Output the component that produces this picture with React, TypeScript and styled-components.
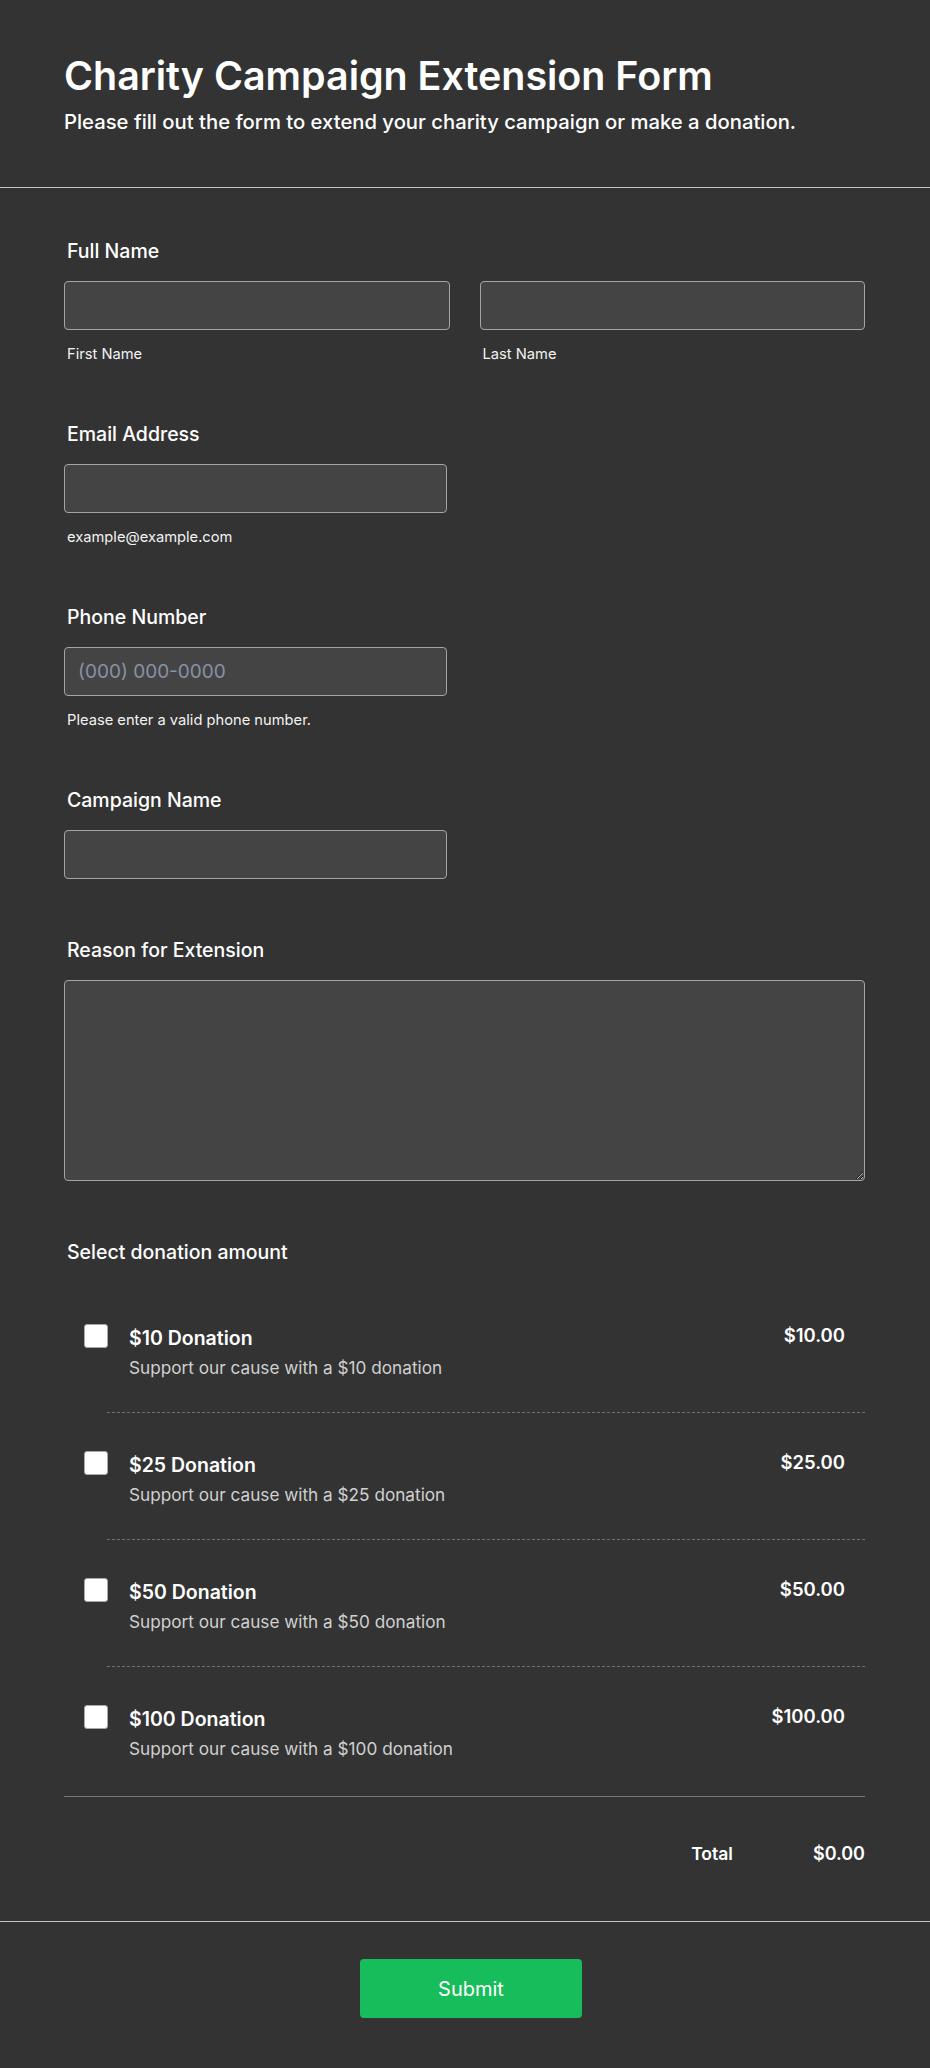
import React from "react";
import styled, { createGlobalStyle } from "styled-components";

const GlobalStyle = createGlobalStyle`
  * { box-sizing: border-box; }
  html, body { margin: 0; padding: 0; background: #333333; }
  body { font-family: Inter, "Noto Sans", "Liberation Sans", sans-serif; color: #ffffff; }
`;

const Page = styled.div`
  min-height: 2068px;
  background: #333333;
  display: flex;
  flex-direction: column;
`;

const Header = styled.header`
  padding: 52px 64px 53px;
  border-bottom: 1px solid #c4c4c4;
  display: flex;
  flex-direction: column;
  gap: 9px;
`;

const Title = styled.h1`
  margin: 0;
  font-size: 39.4px;
  font-weight: 600;
  line-height: normal;
  color: #ffffff;
`;

const Subtitle = styled.p`
  margin: 0;
  font-size: 20.25px;
  font-weight: 500;
  line-height: normal;
  color: #ffffff;
`;

const FormBody = styled.section`
  padding: 51px 65px 0 64px;
  display: flex;
  flex-direction: column;
  gap: 59px;
  border-bottom: 1px solid #c4c4c4;
`;

const Field = styled.div`
  display: flex;
  flex-direction: column;
`;

const Label = styled.label`
  font-size: 19.5px;
  font-weight: 500;
  line-height: normal;
  color: #ffffff;
  margin: 0 0 18px 3px;
`;

const TwoCols = styled.div`
  display: grid;
  grid-template-columns: 1fr 1fr;
  column-gap: 30px;
`;

const Col = styled.div`
  display: flex;
  flex-direction: column;
`;

const Input = styled.input<{ $narrow?: boolean }>`
  width: ${(p) => (p.$narrow ? "383px" : "100%")};
  height: 49px;
  background: #444444;
  border: 1px solid #a4a4aa;
  border-radius: 4px;
  padding: 0 13px;
  font-family: inherit;
  font-size: 19px;
  color: #ffffff;
  outline: none;
  &::placeholder {
    color: #8792a6;
  }
`;

const TextArea = styled.textarea`
  width: 100%;
  height: 201px;
  background: #444444;
  border: 1px solid #a4a4aa;
  border-radius: 4px;
  padding: 12px 13px;
  font-family: inherit;
  font-size: 19px;
  color: #ffffff;
  outline: none;
  display: block;
`;

const Hint = styled.span`
  margin: 15px 0 0 3px;
  font-size: 14.7px;
  line-height: normal;
  color: #f2f2f2;
`;

const DonationBlock = styled.div`
  display: flex;
  flex-direction: column;
`;

const DonationLabel = styled(Label)`
  margin-bottom: 22px;
`;

const List = styled.div`
  display: flex;
  flex-direction: column;
  padding-bottom: 3px;
  border-bottom: 1px solid #777777;
`;

const Item = styled.div`
  display: flex;
  align-items: flex-start;
  padding: 38px 20px 34px;
  gap: 21px;
`;

const Separator = styled.div`
  margin-left: 43px;
  border-top: 1px dashed #707070;
`;

const Check = styled.input`
  appearance: none;
  -webkit-appearance: none;
  margin: 0;
  width: 24px;
  height: 24px;
  flex: 0 0 24px;
  background: #ffffff;
  border: 1px solid #a9a9a9;
  border-radius: 3px;
`;

const ItemText = styled.div`
  flex: 1;
  display: flex;
  flex-direction: column;
  gap: 7px;
  padding-top: 2px;
`;

const ItemTitle = styled.span`
  font-size: 19.5px;
  font-weight: 600;
  line-height: normal;
  color: #ffffff;
`;

const ItemDesc = styled.span`
  font-size: 17.2px;
  line-height: normal;
  color: #d0d0d0;
`;

const Price = styled.span`
  font-size: 18.5px;
  font-weight: 600;
  line-height: normal;
  color: #ffffff;
`;

const TotalRow = styled.div`
  display: flex;
  justify-content: flex-end;
  align-items: baseline;
  gap: 80px;
  padding: 46px 0 57px;
`;

const TotalLabel = styled.span`
  font-size: 17.5px;
  font-weight: 600;
  color: #ffffff;
`;

const TotalValue = styled.span`
  font-size: 18px;
  font-weight: 600;
  color: #ffffff;
`;

const Footer = styled.footer`
  display: flex;
  justify-content: center;
  padding: 37px 0 50px 12px;
`;

const SubmitButton = styled.button`
  width: 222px;
  height: 59px;
  background: #18bd5b;
  border: none;
  border-radius: 4px;
  color: #ffffff;
  font-family: inherit;
  font-size: 20px;
  font-weight: 400;
  cursor: pointer;
`;

const donations = [
  { amount: 10, price: "$10.00" },
  { amount: 25, price: "$25.00" },
  { amount: 50, price: "$50.00" },
  { amount: 100, price: "$100.00" },
];

export default function App() {
  return (
    <Page>
      <GlobalStyle />
      <Header>
        <Title>Charity Campaign Extension Form</Title>
        <Subtitle>Please fill out the form to extend your charity campaign or make a donation.</Subtitle>
      </Header>
      <FormBody>
        <Field>
          <Label>Full Name</Label>
          <TwoCols>
            <Col>
              <Input type="text" />
              <Hint>First Name</Hint>
            </Col>
            <Col>
              <Input type="text" />
              <Hint>Last Name</Hint>
            </Col>
          </TwoCols>
        </Field>
        <Field>
          <Label>Email Address</Label>
          <Input type="email" $narrow />
          <Hint>example@example.com</Hint>
        </Field>
        <Field>
          <Label>Phone Number</Label>
          <Input type="tel" $narrow placeholder="(000) 000-0000" />
          <Hint>Please enter a valid phone number.</Hint>
        </Field>
        <Field>
          <Label>Campaign Name</Label>
          <Input type="text" $narrow />
        </Field>
        <Field>
          <Label>Reason for Extension</Label>
          <TextArea />
        </Field>
        <DonationBlock>
          <DonationLabel>Select donation amount</DonationLabel>
          <List>
            {donations.map((d, i) => (
              <React.Fragment key={d.amount}>
                {i > 0 && <Separator />}
                <Item>
                  <Check type="checkbox" />
                  <ItemText>
                    <ItemTitle>${d.amount} Donation</ItemTitle>
                    <ItemDesc>Support our cause with a ${d.amount} donation</ItemDesc>
                  </ItemText>
                  <Price>{d.price}</Price>
                </Item>
              </React.Fragment>
            ))}
          </List>
          <TotalRow>
            <TotalLabel>Total</TotalLabel>
            <TotalValue>$0.00</TotalValue>
          </TotalRow>
        </DonationBlock>
      </FormBody>
      <Footer>
        <SubmitButton type="button">Submit</SubmitButton>
      </Footer>
    </Page>
  );
}
